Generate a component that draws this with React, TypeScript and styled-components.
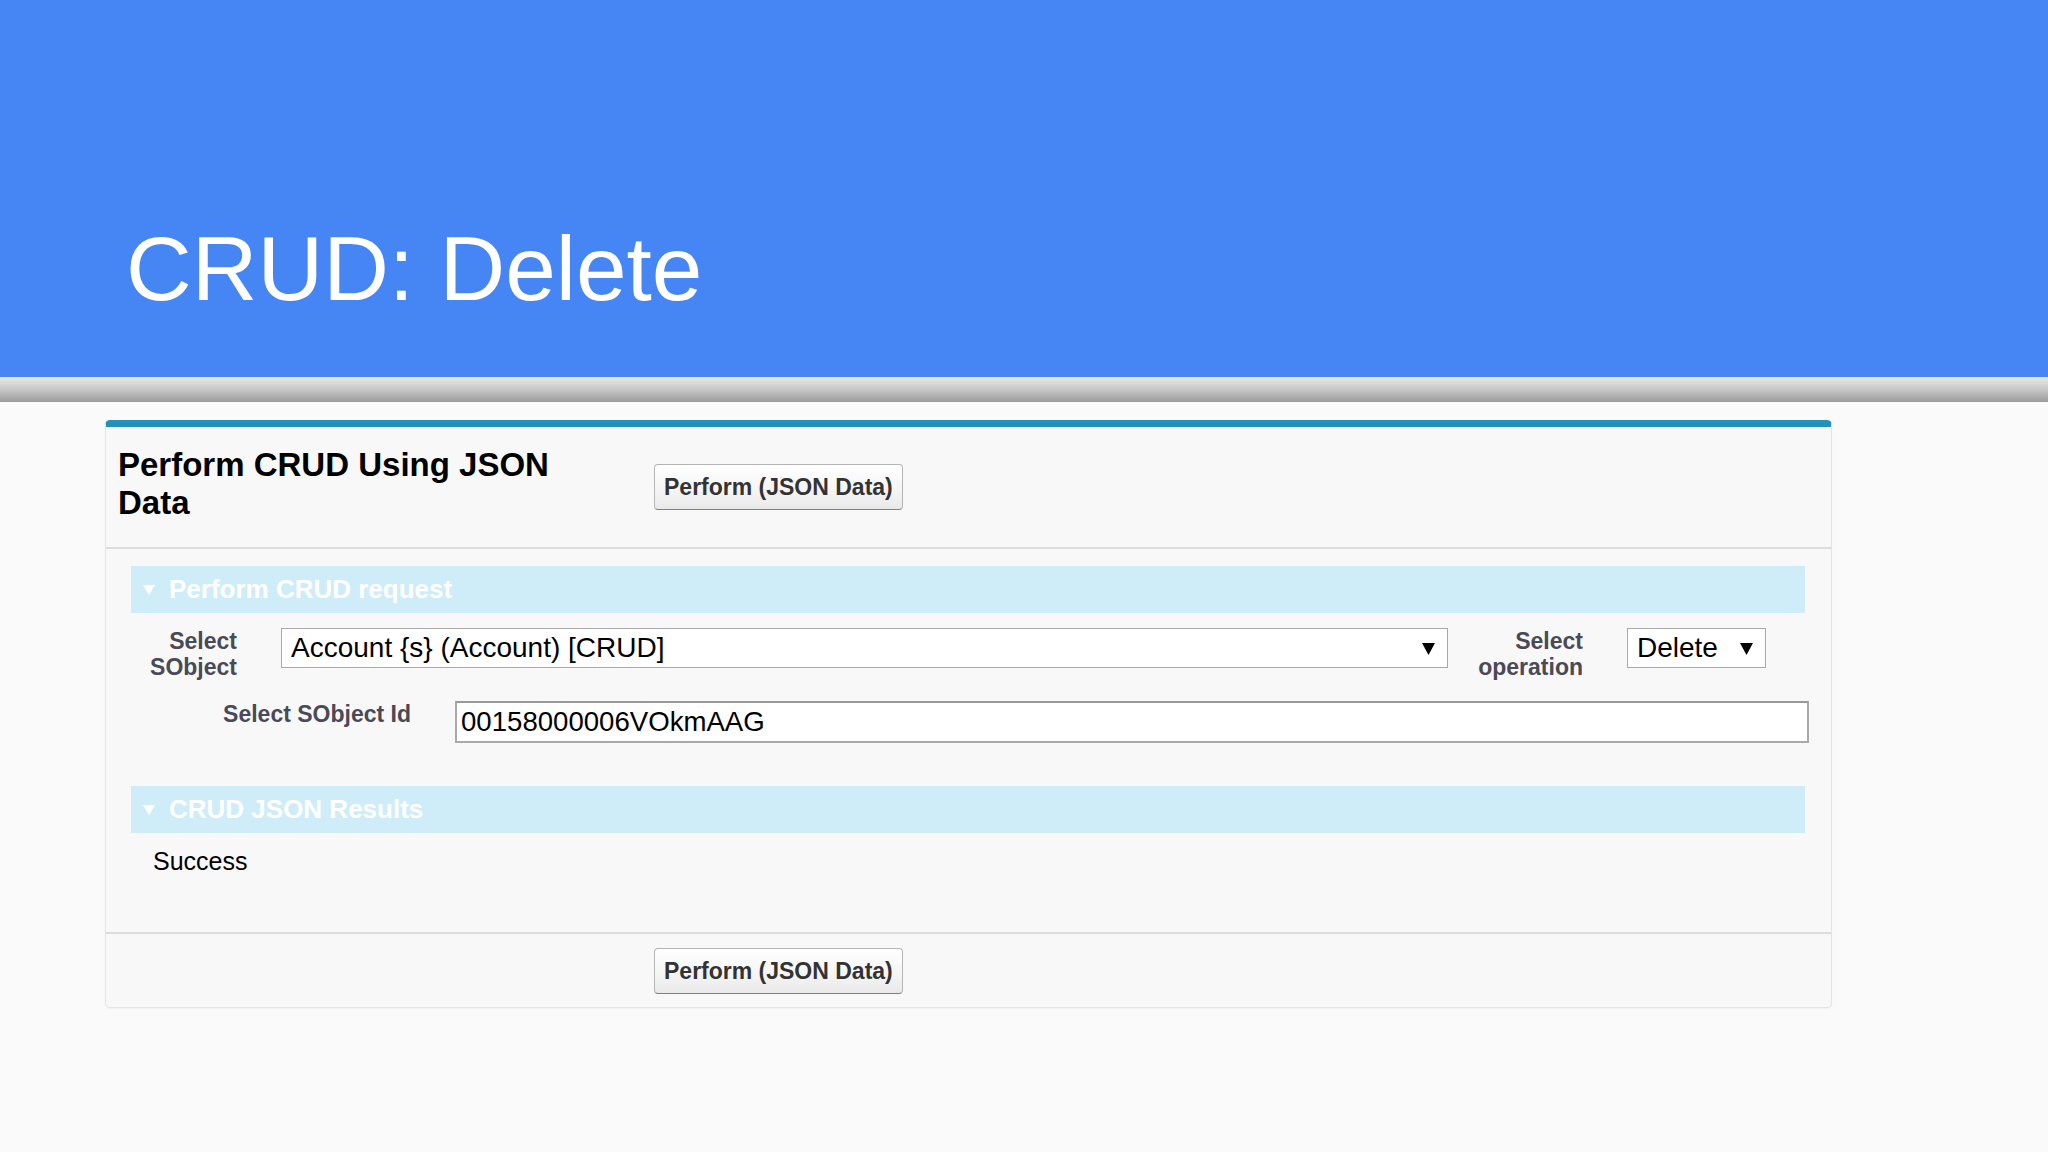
import styled, { createGlobalStyle } from "styled-components";

const GlobalStyle = createGlobalStyle`
  html, body {
    margin: 0;
    padding: 0;
    background: #fafafb;
    font-family: "Liberation Sans", Arial, sans-serif;
  }
`;

const Slide = styled.div`
  width: 2048px;
  min-height: 1152px;
  background: #fafafb;
`;

const TitleBar = styled.header`
  height: 377px;
  box-sizing: border-box;
  padding: 223px 0 0 126px;
  background: #4685f4;
`;

const SlideTitle = styled.h1`
  margin: 0;
  font-size: 91px;
  line-height: 91px;
  font-weight: 400;
  color: #ffffff;
`;

const ShadeBar = styled.div`
  height: 25px;
  background: linear-gradient(#e8e8e8, #cfcfcf 40%, #9c9c9c);
`;

const Content = styled.main`
  padding: 18px 0 0 105px;
`;

const Panel = styled.section`
  width: 1727px;
  box-sizing: border-box;
  background: #f8f8f8;
  border: 1px solid #e4e4e4;
  border-top: 7px solid #2291bc;
  border-radius: 5px;
  box-shadow: 0 1px 2px rgba(0, 0, 0, 0.04);
`;

const PanelHeader = styled.div`
  display: grid;
  grid-template-columns: 536px auto;
  align-items: start;
  padding: 19px 0 25px 12px;
  border-bottom: 2px solid #dcdcdc;
`;

const PanelTitle = styled.h2`
  margin: 0;
  max-width: 470px;
  font-size: 33px;
  line-height: 38px;
  font-weight: 700;
  color: #000000;
`;

const Button = styled.button<{ $offset?: number }>`
  justify-self: start;
  margin-top: ${(p) => p.$offset ?? 0}px;
  height: 46px;
  padding: 0 9px;
  box-sizing: border-box;
  font-family: "Liberation Sans", Arial, sans-serif;
  font-size: 23px;
  font-weight: 700;
  color: #333333;
  background: linear-gradient(#ffffff, #f4f4f4 60%, #e9e9e9);
  border: 1px solid #b5b5b5;
  border-bottom-color: #7f7f7f;
  border-radius: 4px;
  cursor: pointer;
`;

const PanelBody = styled.div`
  padding: 17px 26px 56px 25px;
`;

const SectionHeader = styled.div<{ $gap?: number }>`
  display: flex;
  align-items: center;
  gap: 14px;
  height: 47px;
  margin-top: ${(p) => p.$gap ?? 0}px;
  padding-left: 12px;
  background: #cfedf8;
  color: #ffffff;
  font-size: 26px;
  font-weight: 700;
`;

const FieldRow = styled.div<{ $columns: string; $gap: number }>`
  display: grid;
  grid-template-columns: ${(p) => p.$columns};
  align-items: start;
  margin-top: ${(p) => p.$gap}px;
`;

const FieldLabel = styled.label`
  padding-right: 44px;
  text-align: right;
  font-size: 23px;
  line-height: 26px;
  font-weight: 700;
  color: #4a4a56;
`;

const SelectBox = styled.div`
  display: flex;
  align-items: center;
  justify-content: space-between;
  height: 40px;
  box-sizing: border-box;
  padding: 0 12px 0 9px;
  background: #ffffff;
  border: 1px solid #a9a9a9;
  font-size: 28px;
  color: #000000;
  white-space: nowrap;
`;

const TextInput = styled.input`
  display: block;
  width: 100%;
  height: 42px;
  box-sizing: border-box;
  margin: 0;
  padding: 0 4px;
  font-family: "Liberation Sans", Arial, sans-serif;
  font-size: 27.6px;
  color: #000000;
  background: #ffffff;
  border: 2px solid #a9a9a9;
  border-top-color: #999999;
  outline: none;
`;

const ResultText = styled.p`
  margin: 13px 0 0;
  padding-left: 22px;
  font-size: 25px;
  line-height: 30px;
  color: #000000;
`;

const PanelFooter = styled.div`
  padding: 14px 0 13px 548px;
  border-top: 2px solid #dcdcdc;
`;

function Caret({ color }: { color: string }) {
  return (
    <svg width="13" height="13" viewBox="0 0 13 13" aria-hidden="true">
      <polygon points="0,1 13,1 6.5,13" fill={color} />
    </svg>
  );
}

function Select({ value }: { value: string }) {
  return (
    <SelectBox role="combobox">
      <span>{value}</span>
      <Caret color="#000" />
    </SelectBox>
  );
}

function Section({ title, gap }: { title: string; gap?: number }) {
  return (
    <SectionHeader $gap={gap}>
      <svg width="12" height="10" viewBox="0 0 12 10" aria-hidden="true">
        <polygon points="0,0 12,0 6,10" fill="#fff" />
      </svg>
      <span>{title}</span>
    </SectionHeader>
  );
}

export default function App() {
  return (
    <>
      <GlobalStyle />
      <Slide>
        <TitleBar>
          <SlideTitle>CRUD: Delete</SlideTitle>
        </TitleBar>
        <ShadeBar />
        <Content>
          <Panel>
            <PanelHeader>
              <PanelTitle>Perform CRUD Using JSON Data</PanelTitle>
              <Button $offset={18}>Perform (JSON Data)</Button>
            </PanelHeader>
            <PanelBody>
              <Section title="Perform CRUD request" />
              <FieldRow $columns="150px 1167px 179px 139px" $gap={15}>
                <FieldLabel>Select SObject</FieldLabel>
                <Select value="Account {s} (Account) [CRUD]" />
                <FieldLabel>Select operation</FieldLabel>
                <Select value="Delete" />
              </FieldRow>
              <FieldRow $columns="324px 1354px" $gap={21}>
                <FieldLabel>Select SObject Id</FieldLabel>
                <TextInput readOnly value="00158000006VOkmAAG" />
              </FieldRow>
              <Section title="CRUD JSON Results" gap={43} />
              <ResultText>Success</ResultText>
            </PanelBody>
            <PanelFooter>
              <Button>Perform (JSON Data)</Button>
            </PanelFooter>
          </Panel>
        </Content>
      </Slide>
    </>
  );
}
